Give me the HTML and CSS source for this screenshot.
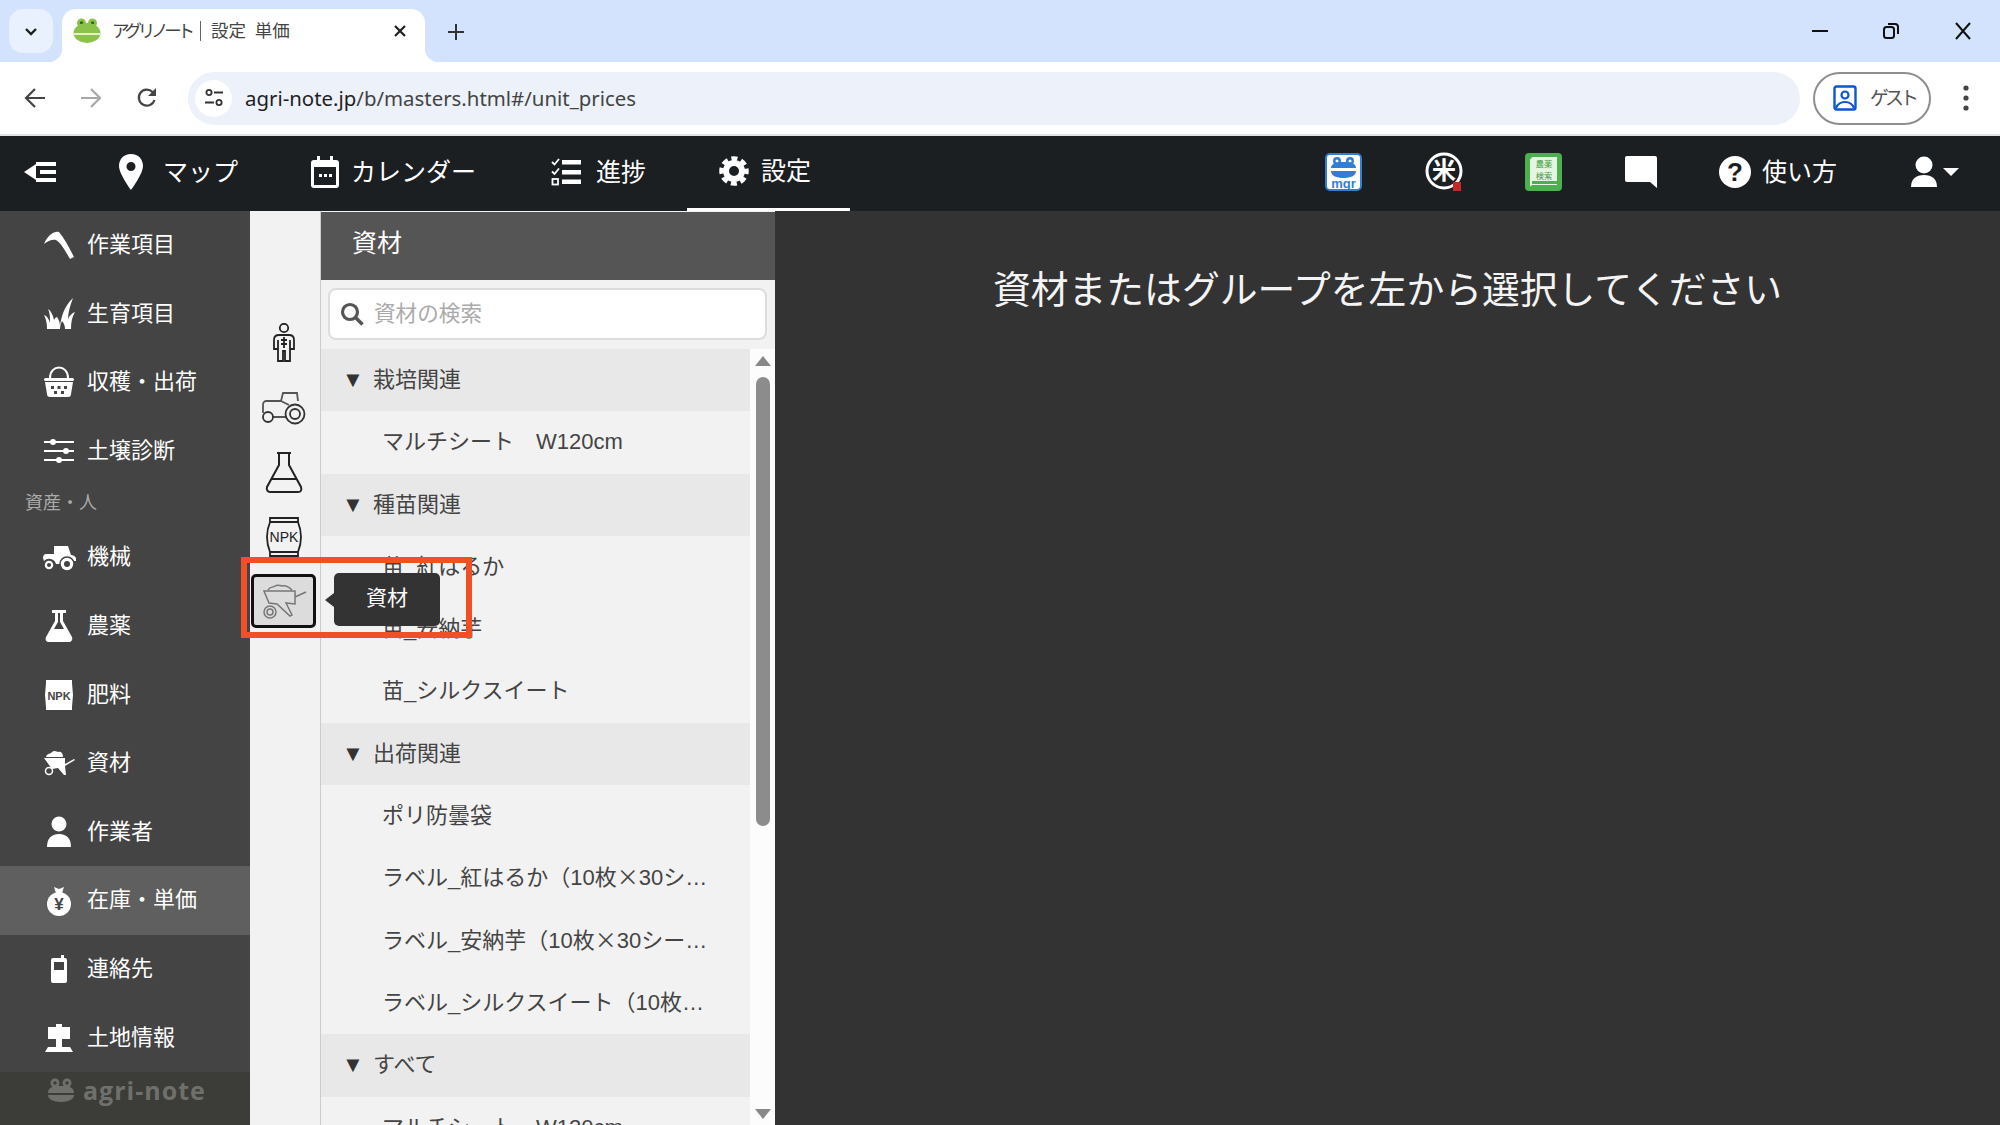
FILE: index.html
```html
<!DOCTYPE html>
<html lang="ja">
<head>
  <meta charset="UTF-8">
  <title>アグリノート | 設定 単価</title>
  <link rel="stylesheet" href="styles.css">
</head>
<body>
  <div class="page">
    <div class="tabstrip">
      <div class="tab-list"><svg width="16" height="16" viewBox="0 0 16 16"><path d="M3 6l5 5 5-5" fill="none" stroke="#1f1f1f" stroke-width="2.4"/></svg></div>
      <div class="tab">
        <svg class="favicon" width="28" height="26" viewBox="0 0 28 26"><circle cx="8.500" cy="5" r="4.500" fill="#8bc34a"/><circle cx="19.500" cy="5" r="4.500" fill="#8bc34a"/><circle cx="8.500" cy="5" r="1.800" fill="#33691e"/><circle cx="19.500" cy="5" r="1.800" fill="#33691e"/><ellipse cx="14" cy="15" rx="13.500" ry="10" fill="#8bc34a"/><path d="M1 16h26" stroke="#e8f0c8" stroke-width="2"/></svg>
        <span class="tab-title"><span class="narrow">アグリノート</span><span class="tab-sep"></span>設定 単価</span>
        <svg class="tab-close" width="14" height="14" viewBox="0 0 14 14"><path d="M2 2l10 10M12 2L2 12" stroke="#1f1f1f" stroke-width="2.200"/></svg>
      </div>
      <svg class="new-tab" width="18" height="18" viewBox="0 0 18 18"><path d="M9 1v16M1 9h16" stroke="#333" stroke-width="2"/></svg>
      <div class="win-controls">
        <svg width="16" height="16" viewBox="0 0 16 16"><path d="M0 8h16" stroke="#111" stroke-width="2"/></svg>
        <svg width="18" height="18" viewBox="0 0 18 18"><rect x="2" y="5" width="10" height="11" rx="2.500" fill="none" stroke="#111" stroke-width="2"/><path d="M6 2h7a3 3 0 0 1 3 3v7" fill="none" stroke="#111" stroke-width="2"/></svg>
        <svg width="18" height="18" viewBox="0 0 18 18"><path d="M2 1l14 16M16 1L2 17" stroke="#111" stroke-width="2"/></svg>
      </div>
    </div>

    <div class="toolbar">
      <svg class="tool-icon" width="22" height="22" viewBox="0 0 22 22"><path d="M21 11H3M11 2l-9 9 9 9" fill="none" stroke="#444" stroke-width="2.200"/></svg>
      <svg class="tool-icon" width="22" height="22" viewBox="0 0 22 22"><path d="M1 11h18M11 2l9 9-9 9" fill="none" stroke="#a8a8a8" stroke-width="2.200"/></svg>
      <svg class="tool-icon" width="22" height="22" viewBox="0 0 22 22"><path d="M18.500 13a8 8 0 1 1-2-8l2.500 2.500" fill="none" stroke="#444" stroke-width="2.200"/><path d="M20 1v8h-8z" fill="#444"/></svg>
      <div class="address">
        <span class="site-info"><svg width="20" height="20" viewBox="0 0 20 20"><circle cx="5" cy="4.500" r="2.600" fill="none" stroke="#333" stroke-width="1.800"/><path d="M10 4.500h9M1 14.500h9" stroke="#333" stroke-width="1.800"/><circle cx="15" cy="14.500" r="2.600" fill="none" stroke="#333" stroke-width="1.800"/></svg></span>
        <span class="url">agri-note.jp<span class="url-dim">/b/masters.html#/unit_prices</span></span>
      </div>
      <div class="guest">
        <svg width="24" height="26" viewBox="0 0 24 26"><rect x="1.500" y="1.500" width="21" height="23" rx="2" fill="none" stroke="#0b57d0" stroke-width="2.400"/><circle cx="12" cy="10" r="3.500" fill="none" stroke="#0b57d0" stroke-width="2.200"/><path d="M3 23c2-5 5-6 9-6s7 1 9 6" fill="none" stroke="#0b57d0" stroke-width="2.200"/></svg>
        <span class="narrow">ゲスト</span>
      </div>
      <svg class="kebab" width="6" height="26" viewBox="0 0 6 26"><circle cx="3" cy="3" r="2.600" fill="#444"/><circle cx="3" cy="13" r="2.600" fill="#444"/><circle cx="3" cy="23" r="2.600" fill="#444"/></svg>
    </div>

    <div class="nav">
      <svg class="nav-collapse" width="32" height="24" viewBox="0 0 32 24"><path d="M12 2h20v4H12zM16 10h16v4H16zM12 18h20v4H12z" fill="#fff"/><path d="M0 12l12-8v16z" fill="#fff"/></svg>
      <a class="nav-item nav-item-map"><svg width="28" height="38" viewBox="0 0 28 38"><path fill-rule="evenodd" d="M14 1C6.500 1 2 6.500 2 13c0 8 12 24 12 24s12-16 12-24C26 6.500 21.500 1 14 1zm0 8a4.500 4.500 0 1 1 0 9 4.500 4.500 0 0 1 0-9z" fill="#fff"/></svg>マップ</a>
      <a class="nav-item nav-item-cal"><svg width="28" height="32" viewBox="0 0 28 32"><path fill-rule="evenodd" d="M6 0h3v4h10V0h3v4h3a3 3 0 0 1 3 3v22a3 3 0 0 1-3 3H3a3 3 0 0 1-3-3V7a3 3 0 0 1 3-3h3zM3 11v18h22V11z" fill="#fff"/><path d="M8 18h3v3H8zM13 18h3v3h-3zM18 18h3v3h-3z" fill="#fff"/></svg>カレンダー</a>
      <a class="nav-item"><svg width="30" height="28" viewBox="0 0 30 28"><path d="M1 4l2.500 2.500L8 1M1 13.500L3.500 16 8 10.500" fill="none" stroke="#fff" stroke-width="1.800"/><rect x="1.500" y="21" width="5.500" height="5.500" fill="none" stroke="#fff" stroke-width="1.800"/><path d="M11 2h19v4.500H11zM11 12h19v4.500H11zM11 21.500h19V26H11z" fill="#fff"/></svg>進捗</a>
      <a class="nav-item nav-item-active"><svg width="30" height="30" viewBox="0 0 30 30"><circle cx="15" cy="15" r="8" fill="none" stroke="#fff" stroke-width="6"/><circle cx="15" cy="15" r="12.500" fill="none" stroke="#fff" stroke-width="4.500" stroke-dasharray="6 3.820" stroke-dashoffset="3"/></svg>設定</a>

      <div class="nav-right">
        <span class="nav-slot"><svg width="37" height="38" viewBox="0 0 37 38"><rect x="1" y="1" width="35" height="36" rx="4" fill="#fff" stroke="#2f7fd6" stroke-width="2"/><circle cx="12" cy="8" r="4" fill="#2f7fd6"/><circle cx="25" cy="8" r="4" fill="#2f7fd6"/><circle cx="12" cy="8" r="1.500" fill="#fff"/><circle cx="25" cy="8" r="1.500" fill="#fff"/><path d="M6 15c0-5 6-6 12.500-6S31 10 31 15z" fill="#2f7fd6"/><path d="M6 18c0 5 6 7 12.500 7S31 23 31 18z" fill="#2f7fd6"/><text x="18.500" y="35" class="icon-mgr">mgr</text></svg></span>
        <span class="nav-slot"><svg width="38" height="40" viewBox="0 0 38 40"><circle cx="19" cy="19" r="17" fill="none" stroke="#fff" stroke-width="3"/><text x="19" y="27" class="icon-kome">米</text><rect x="28" y="30" width="8" height="9" fill="#c62828"/></svg></span>
        <span class="nav-slot"><svg width="37" height="38" viewBox="0 0 37 38"><rect width="37" height="38" rx="4" fill="#4caf50"/><path d="M6 6a2 2 0 0 1 2-2h24v28H8a3 3 0 0 0-3 2V6z" fill="#e6f4e2"/><rect x="7" y="28" width="25" height="3" fill="#4caf50"/><text x="19" y="14" class="icon-book">農薬</text><text x="19" y="26" class="icon-book">検索</text></svg></span>
        <span class="nav-slot nav-slot-chat"><svg width="32" height="32" viewBox="0 0 32 32"><path d="M2 0h28a2 2 0 0 1 2 2v30l-7-6H2a2 2 0 0 1-2-2V2a2 2 0 0 1 2-2z" fill="#fff"/></svg></span>
        <a class="nav-help"><svg width="34" height="34" viewBox="0 0 34 34"><circle cx="17" cy="17" r="16" fill="#fff"/><text x="17" y="26" class="icon-help">?</text></svg>使い方</a>
        <span class="nav-user"><svg width="28" height="32" viewBox="0 0 28 32"><circle cx="14" cy="9" r="8.500" fill="#fff"/><path d="M1 31c0-8 5-12 13-12s13 4 13 12z" fill="#fff"/></svg><i class="caret"></i></span>
      </div>
    </div>

    <div class="content">
      <div class="sidebar">
        <ul class="side-list">
          <li class="side-item"><svg width="32" height="30" viewBox="0 0 32 30"><path d="M1 14C5 5 11 1 16 2c5 6 10 15 15 25l-4 2C22 20 17 12 13 10 9 9 5 11 1 14z" fill="#fff"/></svg>作業項目</li>
          <li class="side-item"><svg width="32" height="32" viewBox="0 0 32 32"><path d="M4 31C4 25 3 21 1 17c3 1 5 4 6 8 0-6 0-10-2-14 3 2 5 6 6 11 1-2 2-3 3-3 2 3 3 6 3 9 1-8 4-20 13-28-3 8-5 15-5 21 2-4 4-6 7-7-3 5-4 10-4 17h-6c0-3-1-6-3-8-1 2-2 5-2 8z" fill="#fff"/></svg>生育項目</li>
          <li class="side-item"><svg width="32" height="32" viewBox="0 0 32 32"><path d="M7 12c0-14 18-14 18 0" fill="none" stroke="#fff" stroke-width="2"/><rect x="1" y="12" width="30" height="3" rx="1.500" fill="#fff"/><path d="M2 16h28l-2 12a3 3 0 0 1-3 3H7a3 3 0 0 1-3-3z" fill="#fff"/><path d="M8 20h3v3H8zM14.500 20h3v3h-3zM21 20h3v3h-3zM11 25h3v3h-3zM18 25h3v3h-3z" fill="#444"/></svg>収穫・出荷</li>
          <li class="side-item"><svg width="32" height="24" viewBox="0 0 32 24"><path d="M1 3h30M1 12h30M1 21h30" stroke="#fff" stroke-width="2"/><circle cx="10" cy="3" r="3" fill="#fff"/><circle cx="23" cy="12" r="3" fill="#fff"/><circle cx="16" cy="21" r="3" fill="#fff"/></svg>土壌診断</li>
          <li class="side-label">資産・人</li>
          <li class="side-item"><svg width="34" height="28" viewBox="0 0 34 28"><path d="M12 2h14l3 9c2 0 4 1 5 3v3h-2a8 8 0 0 0-14 3h-4A7 7 0 0 0 2 17l-1-3c0-2 1-4 3-4h8z" fill="#fff"/><circle cx="7" cy="21" r="5" fill="#fff" stroke="#444" stroke-width="1.500"/><circle cx="7" cy="21" r="2" fill="#444"/><circle cx="25" cy="20" r="7" fill="#fff" stroke="#444" stroke-width="1.500"/><circle cx="25" cy="20" r="3" fill="#444"/></svg>機械</li>
          <li class="side-item"><svg width="30" height="34" viewBox="0 0 30 34"><path d="M8 1h14v3h-3v8l9 16c1 3-1 5-3 5H5c-3 0-4-2-3-5l9-16V4H8z" fill="#fff"/><path d="M14 4v9l-4 7h10l-4-7V4z" fill="#444"/></svg>農薬</li>
          <li class="side-item"><svg width="30" height="32" viewBox="0 0 30 32"><path d="M2 1h26v3l1 12-1 12v3H2v-3L1 16 2 4z" fill="#fff"/><text x="15" y="20.500" class="icon-npk">NPK</text></svg>肥料</li>
          <li class="side-item"><svg width="32" height="26" viewBox="0 0 32 26"><path d="M3 7c1-4 5-3 6-5 3-2 5 0 6 0 3-1 5 1 5 5z" fill="#fff"/><path d="M1 8h21v6l9-5 1 1-10 6 1 9h-2l-6-7-6 1z" fill="#fff"/><circle cx="6" cy="21" r="3.500" fill="none" stroke="#fff" stroke-width="1.500"/></svg>資材</li>
          <li class="side-item"><svg width="26" height="32" viewBox="0 0 26 32"><circle cx="13" cy="8" r="7.500" fill="#fff"/><path d="M1 31c0-8 4-13 12-13s12 5 12 13z" fill="#fff"/></svg>作業者</li>
          <li class="side-item side-item-active"><svg width="26" height="30" viewBox="0 0 26 30"><path d="M8 1l5 2 5-2-2 6h-6z" fill="#fff"/><circle cx="13" cy="18" r="12" fill="#fff"/><text x="13" y="24" class="icon-yen">¥</text></svg>在庫・単価</li>
          <li class="side-item"><svg width="16" height="28" viewBox="0 0 16 28"><path d="M10 0h3v3h1a2 2 0 0 1 2 2v21a2 2 0 0 1-2 2H2a2 2 0 0 1-2-2V5a2 2 0 0 1 2-2h8z" fill="#fff"/><rect x="3" y="7" width="10" height="8" fill="#444"/></svg>連絡先</li>
          <li class="side-item"><svg width="28" height="28" viewBox="0 0 28 28"><path d="M3 3h22v12H3zM11 0h6v3h-6zM11 15h6v8h-6zM3 23h22l3 5H0z" fill="#fff"/></svg>土地情報</li>
        </ul>
        <div class="side-footer">
          <svg width="28" height="24" viewBox="0 0 28 24"><circle cx="8" cy="5" r="4.500" fill="#6f706c"/><circle cx="20" cy="5" r="4.500" fill="#6f706c"/><circle cx="8" cy="5" r="1.700" fill="#3c3d38"/><circle cx="20" cy="5" r="1.700" fill="#3c3d38"/><path d="M1 15c0-6 5-7 13-7s13 1 13 7z" fill="#6f706c"/><path d="M1 17h26c0 4-5 7-13 7S1 21 1 17z" fill="#6f706c"/></svg>
          agri-note
        </div>
      </div>

      <div class="iconbar">
        <span class="bar-icon"><svg width="28" height="40" viewBox="0 0 28 40"><circle cx="14" cy="5" r="4.200" fill="none" stroke="#222" stroke-width="1.800"/><path d="M9 12h10c3 0 5 2 5 5v9h-4v-9M9 12c-3 0-5 2-5 5v9h4v-9M8 20v18h5V28h2v10h5V20M14 14v11M11 17h6M11 21h6" fill="none" stroke="#222" stroke-width="1.800"/></svg></span>
        <span class="bar-icon"><svg width="46" height="34" viewBox="0 0 46 34"><path d="M20 10l2-8h14l1 8M20 10H5c-2 0-3 2-3 4v8M12 26h14M28 14l-8-4" fill="none" stroke="#555" stroke-width="1.800"/><circle cx="7" cy="26" r="5" fill="none" stroke="#333" stroke-width="1.800"/><circle cx="34" cy="23" r="9.500" fill="none" stroke="#333" stroke-width="1.800"/><circle cx="34" cy="23" r="5" fill="none" stroke="#333" stroke-width="1.800"/></svg></span>
        <span class="bar-icon"><svg width="38" height="42" viewBox="0 0 38 42"><path d="M12 2h14M14 2v12L2 36c-1 3 1 5 3 5h28c3 0 4-2 3-5L24 14V2M7 28h24" fill="none" stroke="#222" stroke-width="2"/></svg></span>
        <span class="bar-icon"><svg width="36" height="40" viewBox="0 0 36 40"><path d="M4 1h28v4H4zM4 35h28v4H4zM4 5C0 15 0 25 4 35M32 5c4 10 4 20 0 30" fill="none" stroke="#222" stroke-width="1.800"/><text x="18" y="25" class="icon-npk-line">NPK</text></svg></span>
        <span class="bar-icon bar-icon-active"><svg width="46" height="38" viewBox="0 0 46 38"><path d="M3 9h31v13l-9-1 6 12-2 1-13-12-8-1zM34 15l11-5M7 8c2-4 5-2 7-4 3-2 5 0 7 0 3-1 7 1 10 4" fill="none" stroke="#777" stroke-width="1.500"/><circle cx="9" cy="30" r="6" fill="none" stroke="#777" stroke-width="1.500"/><circle cx="9" cy="30" r="3" fill="none" stroke="#777" stroke-width="1.500"/></svg></span>
      </div>

      <div class="panel">
        <div class="panel-head">資材</div>
        <div class="panel-search">
          <div class="search-box">
            <svg width="24" height="24" viewBox="0 0 24 24"><circle cx="10" cy="10" r="7.500" fill="none" stroke="#555" stroke-width="3.200"/><path d="M15.500 15.500l7 7" stroke="#555" stroke-width="3.600"/></svg>
            <span>資材の検索</span>
          </div>
        </div>
        <div class="tree-wrap">
          <ul class="tree">
            <li class="tree-group"><span class="arrow">▼</span>栽培関連</li>
            <li class="tree-item">マルチシート　W120cm</li>
            <li class="tree-group"><span class="arrow">▼</span>種苗関連</li>
            <li class="tree-item">苗_紅はるか</li>
            <li class="tree-item">苗_安納芋</li>
            <li class="tree-item">苗_シルクスイート</li>
            <li class="tree-group"><span class="arrow">▼</span>出荷関連</li>
            <li class="tree-item">ポリ防曇袋</li>
            <li class="tree-item">ラベル_紅はるか（10枚<span class="cjk">×</span>30シート）</li>
            <li class="tree-item">ラベル_安納芋（10枚<span class="cjk">×</span>30シート）</li>
            <li class="tree-item">ラベル_シルクスイート（10枚<span class="cjk">×</span>30シート）</li>
            <li class="tree-group"><span class="arrow">▼</span>すべて</li>
            <li class="tree-item">マルチシート　W120cm</li>
          </ul>
          <div class="scrollbar">
            <i class="scroll-up"></i>
            <div class="scroll-thumb"></div>
            <i class="scroll-down"></i>
          </div>
        </div>
      </div>

      <div class="main">資材またはグループを左から選択してください</div>

      <div class="tooltip">資材</div>
      <div class="callout"></div>
    </div>
  </div>
</body>
</html>
```

FILE: styles.css
```css
* {
  box-sizing: border-box;
}
html, body {
  margin: 0;
  padding: 0;
}
body {
  width: 2000px;
  height: 1125px;
  overflow: hidden;
  font-family: "Liberation Sans", "Noto Sans CJK JP", sans-serif;
  line-height: 1.2;
  color: #444;
}
ul {
  list-style: none;
  margin: 0;
  padding: 0;
}
svg {
  display: block;
  flex: none;
}
.page {
  display: flex;
  flex-direction: column;
  height: 1125px;
}
.narrow {
  letter-spacing: -4px;
}
.cjk {
  font-family: "Noto Sans CJK JP", sans-serif;
  line-height: 0;
}

/* browser tabs */
.tabstrip {
  display: flex;
  align-items: flex-start;
  flex: none;
  height: 62px;
  background: #d3e3fd;
  padding: 9px 0 0 9px;
}
.tab-list {
  display: flex;
  align-items: center;
  justify-content: center;
  width: 44px;
  height: 44px;
  background: #e9f0fe;
  border-radius: 14px;
}
.tab {
  position: relative;
  display: flex;
  align-items: center;
  width: 363px;
  height: 53px;
  margin-left: 9px;
  padding: 0 18px 9px 11px;
  background: #fff;
  border-radius: 14px 14px 0 0;
}
.tab::before, .tab::after {
  content: "";
  position: absolute;
  bottom: 0;
  width: 14px;
  height: 14px;
}
.tab::before {
  left: -14px;
  background: radial-gradient(circle at 0 0, transparent 14px, #fff 14.500px);
}
.tab::after {
  right: -14px;
  background: radial-gradient(circle at 100% 0, transparent 14px, #fff 14.500px);
}
.tab-title {
  display: flex;
  align-items: center;
  margin-left: 11px;
  font-size: 17.500px;
  word-spacing: 4px;
  color: #444;
  white-space: pre;
}
.tab-title .narrow {
  letter-spacing: -4.200px;
}
.tab-sep {
  width: 1px;
  height: 20px;
  margin: 0 10px 0 9px;
  background: #666;
}
.tab-close {
  margin-left: auto;
}
.new-tab {
  margin: 14px 0 0 22px;
}
.win-controls {
  display: flex;
  align-items: center;
  gap: 54px;
  margin: 13px 28px 0 auto;
}

/* browser toolbar */
.toolbar {
  display: flex;
  align-items: center;
  flex: none;
  height: 74px;
  padding: 0 0 0 24px;
  background: #fff;
  border-bottom: 2px solid #e2e2e2;
  border-radius: 10px 10px 0 0;
}
.tool-icon {
  margin-right: 34px;
}
.address {
  display: flex;
  align-items: center;
  width: 1612px;
  height: 53px;
  margin-left: -4px;
  padding-left: 7px;
  background: #ecf1fa;
  border-radius: 27px;
}
.site-info {
  display: flex;
  align-items: center;
  justify-content: center;
  width: 37px;
  height: 37px;
  background: #fff;
  border-radius: 50%;
}
.url {
  margin-left: 13px;
  font-family: "Noto Sans", sans-serif;
  font-size: 20.400px;
  color: #1f1f1f;
}
.url-dim {
  color: #444;
}
.guest {
  display: flex;
  align-items: center;
  gap: 13px;
  width: 118px;
  height: 53px;
  margin-left: 13px;
  padding: 2px 0 0 18px;
  border: 2px solid #8e8e8e;
  border-radius: 27px;
  font-size: 19px;
  color: #555;
}
.guest svg {
  margin-top: -2px;
}
.kebab {
  margin-left: 32px;
}

/* app nav */
.nav {
  display: flex;
  align-items: center;
  flex: none;
  height: 75px;
  background: #1c1f22;
  color: #fff;
  font-size: 25px;
}
.nav-collapse {
  margin: -3px 29px 0 24px;
}
.nav-item {
  display: flex;
  align-items: center;
  gap: 15px;
  height: 75px;
  padding: 0 41px 3px 32px;
}
.nav-item-map {
  gap: 18px;
}
.nav-item-cal {
  gap: 12px;
  margin-right: 2px;
}
.nav-item-active {
  gap: 12px;
  padding-right: 39px;
  border-bottom: 3px solid #fff;
}
.nav-right {
  display: flex;
  align-items: center;
  margin: -3px 0 0 auto;
  padding-right: 41px;
}
.nav-slot {
  display: flex;
  justify-content: center;
  width: 100px;
}
.nav-slot-chat {
  width: 94px;
}
.nav-help {
  display: flex;
  align-items: center;
  gap: 10px;
  margin-left: 30px;
}
.nav-user {
  display: flex;
  align-items: center;
  gap: 5px;
  margin-left: 73px;
}
.caret {
  width: 0;
  height: 0;
  border-left: 8px solid transparent;
  border-right: 8px solid transparent;
  border-top: 8px solid #fff;
}

/* svg text */
.icon-mgr {
  font: bold 13px "Liberation Sans", sans-serif;
  fill: #2f7fd6;
  text-anchor: middle;
}
.icon-kome {
  font: bold 24px "Noto Sans CJK JP", sans-serif;
  fill: #fff;
  text-anchor: middle;
}
.icon-book {
  font: 8.200px "Noto Sans CJK JP", sans-serif;
  fill: #3c9f40;
  text-anchor: middle;
}
.icon-help {
  font: bold 26px "Liberation Sans", sans-serif;
  fill: #1c1f22;
  text-anchor: middle;
}
.icon-npk {
  font: bold 11px "Liberation Sans", sans-serif;
  fill: #444;
  text-anchor: middle;
}
.icon-npk-line {
  font: 14px "Liberation Sans", sans-serif;
  fill: #222;
  text-anchor: middle;
}
.icon-yen {
  font: bold 17px "Liberation Sans", sans-serif;
  fill: #444;
  text-anchor: middle;
}

/* main area */
.content {
  position: relative;
  display: flex;
  flex: 1;
  overflow: hidden;
}
.sidebar {
  position: relative;
  flex: none;
  width: 250px;
  background: #444;
  color: #fff;
  font-size: 22px;
  overflow: hidden;
}
.side-item {
  display: flex;
  align-items: center;
  height: 68.600px;
  padding-left: 87px;
  position: relative;
}
.side-item svg {
  position: absolute;
  left: 59px;
  top: 50%;
  transform: translate(-50%, -50%);
}
.side-item-active {
  background: #5f5f5f;
}
.side-label {
  display: flex;
  align-items: center;
  height: 38px;
  padding: 0 0 2px 25px;
  font-size: 18px;
  color: #aaa;
}
.side-footer {
  position: absolute;
  left: 0;
  right: 0;
  bottom: 0;
  display: flex;
  align-items: center;
  gap: 8px;
  height: 53px;
  padding: 0 0 18px 47px;
  background: #3c3d38;
  color: #6f706c;
  font: bold 25px "Open Sans", sans-serif;
  letter-spacing: 1px;
}
.iconbar {
  display: flex;
  flex-direction: column;
  align-items: center;
  flex: none;
  width: 71px;
  padding: 100px 3px 0 0;
  background: #f2f2f2;
  border-right: 1px solid #ccc;
}
.bar-icon {
  display: flex;
  align-items: center;
  justify-content: center;
  width: 65px;
  height: 64.500px;
}
.bar-icon-active {
  height: 54px;
  margin-top: 5px;
  background: #dcdcdc;
  border: 3px solid #111;
  border-radius: 5px;
}
.panel {
  display: flex;
  flex-direction: column;
  flex: none;
  width: 454px;
  background: #f2f2f2;
}
.panel-head {
  display: flex;
  align-items: center;
  height: 68px;
  margin-top: 1px;
  padding: 0 0 6px 31px;
  background: #555;
  color: #fff;
  font-size: 25px;
}
.panel-search {
  flex: none;
  height: 69px;
  padding: 8px 8px 0 7px;
}
.search-box {
  display: flex;
  align-items: center;
  gap: 10px;
  height: 52px;
  padding-left: 10px;
  background: #fff;
  border: 2px solid #ddd;
  border-radius: 8px;
  font-size: 21.600px;
  color: #aaa;
}
.tree-wrap {
  display: flex;
  flex: 1;
  overflow: hidden;
}
.tree {
  flex: none;
  width: 429px;
}
.tree-group {
  display: flex;
  height: 62.300px;
  padding-left: 21px;
  background: #e8e8e8;
  font-size: 22px;
  line-height: 61px;
  color: #444;
}
.arrow {
  width: 31px;
  font-size: 22px;
  color: #333;
}
.tree-item {
  height: 62.300px;
  padding: 0 42px 0 61px;
  line-height: 62.300px;
  font-size: 22px;
  color: #444;
  white-space: nowrap;
  overflow: hidden;
  text-overflow: ellipsis;
}
.scrollbar {
  display: flex;
  flex-direction: column;
  align-items: center;
  flex: 1;
  padding-top: 7px;
  background: #fcfcfc;
}
.scroll-up, .scroll-down {
  width: 0;
  height: 0;
  border-left: 8px solid transparent;
  border-right: 8px solid transparent;
}
.scroll-up {
  border-bottom: 10px solid #888;
}
.scroll-down {
  margin-top: 283px;
  border-top: 10px solid #888;
}
.scroll-thumb {
  width: 14px;
  height: 449px;
  margin-top: 11px;
  background: #8c8c8c;
  border-radius: 7px;
}
.main {
  flex: 1;
  padding-top: 52px;
  background: #333;
  color: #f4f4f4;
  font-size: 37.800px;
  line-height: 54px;
  text-align: center;
}

/* overlays */
.tooltip {
  position: absolute;
  left: 334px;
  top: 362px;
  width: 106px;
  height: 53px;
  background: #333;
  border-radius: 5px;
  color: #fff;
  font-size: 21px;
  line-height: 50px;
  text-align: center;
}
.tooltip::before {
  content: "";
  position: absolute;
  left: -9px;
  top: 20px;
  border-top: 7px solid transparent;
  border-bottom: 7px solid transparent;
  border-right: 9px solid #333;
}
.callout {
  position: absolute;
  left: 241px;
  top: 346px;
  width: 231px;
  height: 81px;
  border: 6px solid #f15025;
}
```
